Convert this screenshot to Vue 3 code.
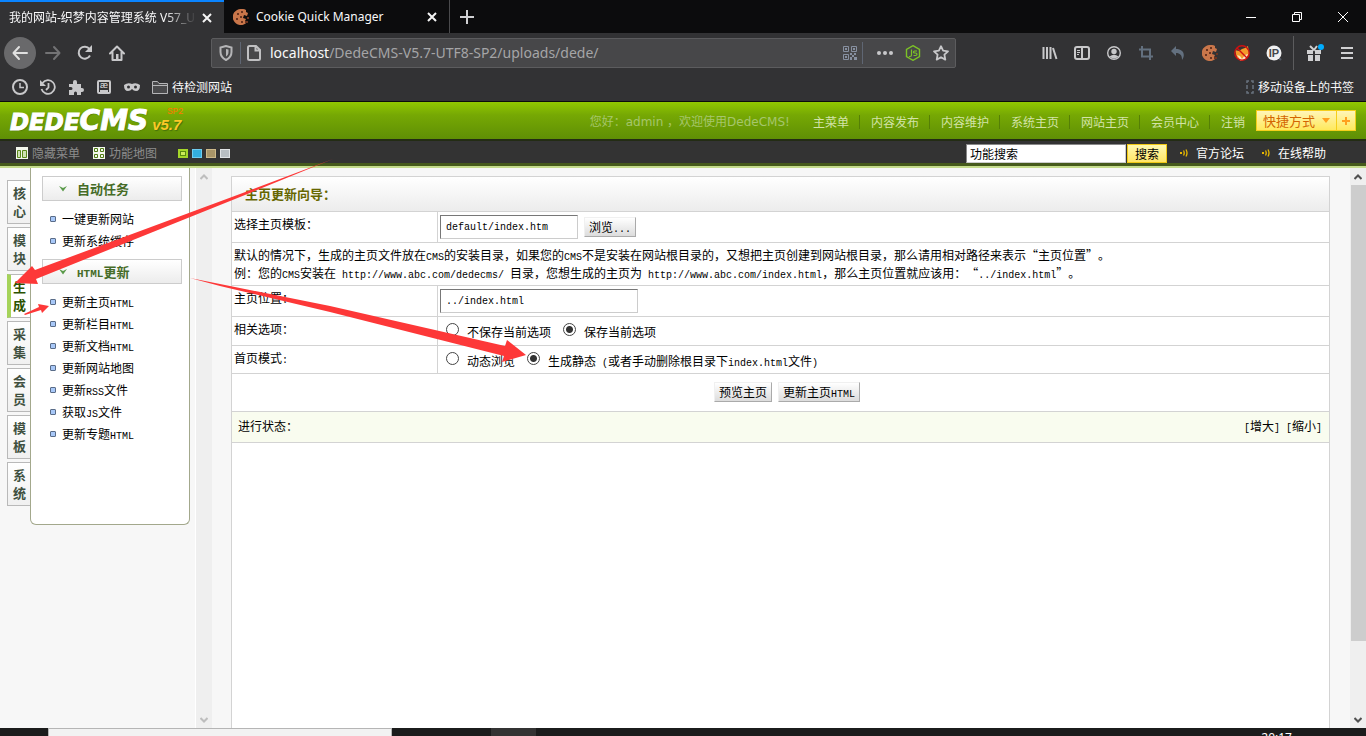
<template>
  <div class="screen" lang="zh-CN">
    <!-- Browser tabs -->
    <header class="tabbar">
      <div class="tab tab-active">
        <span class="tab-title fade">我的网站-织梦内容管理系统 V57_U</span>
        <button class="icon-btn tab-close" aria-label="关闭标签页">
          <svg width="12" height="12" viewBox="0 0 12 12"><path d="M2 2l8 8M10 2l-8 8" stroke="#f5f5f5" stroke-width="2" fill="none" /></svg>
        </button>
      </div>
      <div class="tab">
        <svg class="tab-icon" width="16" height="16" viewBox="0 0 16 16">
          <path d="M8 0a8 8 0 1 0 6 13l-2-1 1-2-3-1 1-3 3 1 1-3-2-1 0-2A8 8 0 0 0 8 0z" fill="#c9764a" />
          <path d="M4 4h2v2H4zM8 2h2v2H8zM3 9h2v2H3zM7 7h2v2H7zM8 12h2v2H8zM12 12h3v2h-3zM14 8h2v2h-2z" fill="#6b3420" />
        </svg>
        <span class="tab-title">Cookie Quick Manager</span>
        <button class="icon-btn tab-close" aria-label="关闭标签页">
          <svg width="12" height="12" viewBox="0 0 12 12"><path d="M2 2l8 8M10 2l-8 8" stroke="#f5f5f5" stroke-width="2" fill="none" /></svg>
        </button>
      </div>
      <button class="icon-btn new-tab" aria-label="新建标签页">
        <svg width="14" height="14" viewBox="0 0 14 14"><path d="M7 0v14M0 7h14" stroke="#d0d0d2" stroke-width="2" /></svg>
      </button>
      <div class="window-controls">
        <button class="icon-btn" aria-label="最小化">
          <svg width="10" height="10" viewBox="0 0 10 10"><path d="M0 5.5h10" stroke="#fff" /></svg>
        </button>
        <button class="icon-btn" aria-label="还原">
          <svg width="10" height="10" viewBox="0 0 10 10"><path d="M.5 2.500h7v7h-7zM2.500 2.500v-2h7v7h-2" stroke="#fff" fill="none" /></svg>
        </button>
        <button class="icon-btn" aria-label="关闭">
          <svg width="10" height="10" viewBox="0 0 10 10"><path d="M0 0l10 10M10 0L0 10" stroke="#fff" /></svg>
        </button>
      </div>
    </header>

    <!-- Navigation bar -->
    <div class="navbar">
      <button class="icon-btn back" aria-label="后退">
        <svg width="16" height="16" viewBox="0 0 16 16"><path d="M15 8H2M7 2L1.500 8 7 14" stroke="#e0e0e0" stroke-width="2" fill="none" stroke-linecap="round" stroke-linejoin="round" /></svg>
      </button>
      <button class="icon-btn tool" aria-label="前进">
        <svg width="16" height="16" viewBox="0 0 16 16"><path d="M1 8h13M9 2l5.500 6L9 14" stroke="#737375" stroke-width="2" fill="none" stroke-linecap="round" stroke-linejoin="round" /></svg>
      </button>
      <button class="icon-btn tool" aria-label="刷新">
        <svg width="16" height="16" viewBox="0 0 16 16"><path d="M13 10.500A6 6 0 1 1 12.500 4" stroke="#c8c8ca" stroke-width="2" fill="none" /><path d="M15 0v7H8z" fill="#c8c8ca" /></svg>
      </button>
      <button class="icon-btn tool" aria-label="主页">
        <svg width="16" height="16" viewBox="0 0 16 16"><path d="M1 8.500L8 1.500l7 7M3.500 7.500V15h9V7.500" stroke="#c8c8ca" stroke-width="2" fill="none" stroke-linecap="round" stroke-linejoin="round" /><path d="M7 9h2.500v6H7z" fill="#c8c8ca" /></svg>
      </button>
      <div class="urlbar">
        <svg class="shield" width="14" height="16" viewBox="0 0 14 16"><path d="M7 1L1.500 2.500V7c0 4 2.500 6.500 5.500 8 3-1.500 5.500-4 5.500-8V2.500z" stroke="#b5b5b7" stroke-width="2" fill="none" /><path d="M7 4v7.500c1.500-1 2.500-2.500 2.500-4.500V4.500z" fill="#b5b5b7" /></svg>
        <span class="url-sep"></span>
        <svg width="14" height="16" viewBox="0 0 14 16"><path d="M2.500 1H9l4 4v8.500a1.500 1.500 0 0 1-1.500 1.500h-9A1.500 1.500 0 0 1 1 13.500v-11A1.500 1.500 0 0 1 2.500 1zM8.500 1v4.500H13" stroke="#c0c0c2" stroke-width="2" fill="none" /></svg>
        <span class="url"><b>localhost</b>/DedeCMS-V5.7-UTF8-SP2/uploads/dede/</span>
        <svg width="14" height="14" viewBox="0 0 14 14">
          <path d="M.5 .5h5v5h-5zM8.500 .5h5v5h-5zM.5 8.500h5v5h-5z" stroke="#8790a0" fill="none" />
          <path d="M2 2h2v2H2zM10 2h2v2h-2zM2 10h2v2H2zM7 7h2v2H7zM9 9h2v2H9zM11 7h2v2h-2zM7 11h2v3H7zM11 11h3v3h-3z" fill="#8790a0" />
        </svg>
        <span class="url-sep"></span>
        <svg class="dots" width="16" height="16" viewBox="0 0 16 16"><circle cx="2" cy="8" r="2" /><circle cx="8" cy="8" r="2" /><circle cx="14" cy="8" r="2" /></svg>
        <svg class="node" width="16" height="16" viewBox="0 0 16 16"><path d="M8 .7l6.500 3.700v7.200L8 15.300l-6.500-3.700V4.400z" stroke="#7cc327" stroke-width="1.400" fill="none" /><path d="M6.500 4.500V10q0 1.500-1.500 1.500H4M12 6H9.500q-1 0-1 1t1 1h1q1.500 0 1.500 1.200T10.500 10.500H8.500" stroke="#7cc327" stroke-width="1.200" fill="none" /></svg>
        <svg width="16" height="16" viewBox="0 0 16 16"><path d="M8 1.200l2.100 4.500 4.900.6-3.600 3.400.9 4.900L8 12.200l-4.300 2.400.9-4.900L1 6.300l4.900-.6z" stroke="#c8c8ca" stroke-width="1.800" fill="none" stroke-linejoin="round" /></svg>
      </div>
      <div class="tools">
        <button class="icon-btn tool" aria-label="书库">
          <svg width="16" height="16" viewBox="0 0 16 16"><path d="M1.500 2v12M5 2v12M8.500 2v12M11 3l3.500 11" stroke="#c8c8ca" stroke-width="2" /></svg>
        </button>
        <button class="icon-btn tool" aria-label="侧栏">
          <svg width="16" height="14" viewBox="0 0 16 14"><rect x="1" y="1" width="14" height="12" rx="2" stroke="#c8c8ca" stroke-width="2" fill="none" /><path d="M8 1v12" stroke="#c8c8ca" stroke-width="2" /><path d="M3 4.500h3M3 6.500h3M3 8.500h2" stroke="#c8c8ca" /></svg>
        </button>
        <button class="icon-btn tool" aria-label="账户">
          <svg width="14" height="14" viewBox="0 0 14 14"><circle cx="7" cy="7" r="6.300" stroke="#c8c8ca" stroke-width="1.400" fill="none" /><circle cx="7" cy="5.500" r="2.700" fill="#c8c8ca" /><path d="M2.500 10.500q4.500-3.500 9 0Q7 14.500 2.500 10.500z" fill="#c8c8ca" /></svg>
        </button>
        <button class="icon-btn tool" aria-label="截图">
          <svg width="14" height="14" viewBox="0 0 14 14"><path d="M3 0v10.500h11M0 3.500h11V14" stroke="#63707f" stroke-width="2" fill="none" /></svg>
        </button>
        <button class="icon-btn tool" aria-label="撤销">
          <svg width="14" height="14" viewBox="0 0 14 14"><path d="M5 0v3c7 0 10 5 6 11 0-5-2-7-6-7v3L0 5z" fill="#63707f" /></svg>
        </button>
        <button class="icon-btn tool" aria-label="Cookie">
          <svg width="16" height="16" viewBox="0 0 16 16">
            <path d="M8 0a8 8 0 1 0 6 13l-2-1 1-2-3-1 1-3 3 1 1-3-2-1 0-2A8 8 0 0 0 8 0z" fill="#c9764a" />
            <path d="M4 4h2v2H4zM8 2h2v2H8zM3 9h2v2H3zM7 7h2v2H7zM8 12h2v2H8zM12 12h3v2h-3zM14 8h2v2h-2z" fill="#6b3420" />
          </svg>
        </button>
        <button class="icon-btn tool" aria-label="代理">
          <svg width="16" height="16" viewBox="0 0 16 16"><path d="M1 5l4 1 3-2 3-1 3-2 1 8-3 5-5 2-4-3z" fill="#f39a2b" /><path d="M3 10l3 1 2 3 3-4 3-1-2 5-5 2z" fill="#f7e3c4" /><circle cx="8" cy="8" r="7.200" stroke="#d01010" stroke-width="1.400" fill="none" /><path d="M3 3l10 10" stroke="#d01010" stroke-width="1.400" /></svg>
        </button>
        <button class="icon-btn tool" aria-label="IP">
          <svg width="16" height="16" viewBox="0 0 16 16"><path d="M12 12l3 3" stroke="#555b66" stroke-width="2" /><circle cx="8" cy="8" r="7.500" fill="#f0f0f2" /><text x="8" y="12" text-anchor="middle" font-size="11" font-weight="bold" fill="#44464c">IP</text></svg>
        </button>
        <span class="tools-sep"></span>
        <button class="icon-btn tool" aria-label="新功能">
          <svg width="18" height="18" viewBox="0 0 18 18"><path d="M1 6h6v4H1zM9 6h6v4H9zM2 11h5v6H2zM9 11h5v6H9z" fill="#d0d0d2" /><path d="M4 2l4 4 3-4" stroke="#d0d0d2" stroke-width="2" fill="none" /><circle cx="15" cy="3" r="3" fill="#00adff" /></svg>
        </button>
        <button class="icon-btn tool" aria-label="菜单">
          <svg width="12" height="12" viewBox="0 0 12 12"><path d="M0 1h12M0 6h12M0 11h12" stroke="#d0d0d2" stroke-width="2" /></svg>
        </button>
      </div>
    </div>

    <!-- Bookmarks -->
    <div class="bookmarks">
      <svg width="16" height="16" viewBox="0 0 16 16"><circle cx="8" cy="8" r="7" stroke="#c8c8ca" stroke-width="2" fill="none" /><path d="M8 4v4.500h4" stroke="#c8c8ca" stroke-width="1.500" fill="none" /></svg>
      <svg width="16" height="16" viewBox="0 0 16 16"><path d="M2.500 4a6.800 6.800 0 1 1-1 6M8.500 4v4.500L6 11" stroke="#c8c8ca" stroke-width="1.800" fill="none" /><path d="M0 1v6h6z" fill="#c8c8ca" /></svg>
      <svg width="16" height="16" viewBox="0 0 16 16"><path d="M1 5h4V3a2 2 0 1 1 4 0v2h4v4h1a2 2 0 1 1 0 4h-1v3H9v-2a1.500 1.500 0 0 0-3 0v2H1v-5h2a1.500 1.500 0 0 0 0-3H1z" fill="#c8c8ca" /></svg>
      <svg width="16" height="16" viewBox="0 0 16 16"><rect x="2" y="2" width="12" height="12" rx="1" stroke="#c8c8ca" stroke-width="2" fill="none" /><text x="8" y="9" text-anchor="middle" font-size="9" fill="#e0e0e0">æ</text><path d="M4 12h8" stroke="#c8c8ca" stroke-width="2" /></svg>
      <svg width="16" height="16" viewBox="0 0 16 16"><path d="M0 6q4-3 8-1 4-2 8 1 0 6-4 6-2.500 0-4-2-1.500 2-4 2-4 0-4-6z" fill="#c8c8ca" /><circle cx="4.500" cy="8" r="1.500" fill="#323234" /><circle cx="11.500" cy="8" r="1.500" fill="#323234" /></svg>
      <a class="bookmark" href="#">
        <svg width="16" height="16" viewBox="0 0 16 16"><path d="M.5 14.500v-12h5l1.500 2h8.500v10zM.5 6.500h15" stroke="#b5b5b7" fill="#4a4a4c" /></svg>
        待检测网站
      </a>
      <a class="bookmark mobile" href="#">
        <svg width="8" height="14" viewBox="0 0 8 14"><path d="M1 3V1h2M5 1h2v2M1 11v2h2M5 13h2v-2M1 5v4M7 5v4" stroke="#69737f" stroke-width="1.500" fill="none" /></svg>
        移动设备上的书签
      </a>
    </div>

    <!-- CMS header -->
    <div class="cms-top">
      <div class="logo">
        <span class="logo-dede">DEDE</span><span class="logo-cms">CMS</span>
        <span class="logo-version"><small>SP2</small>v5.7</span>
      </div>
      <p class="greeting">您好：admin ，欢迎使用DedeCMS!</p>
      <nav class="top-nav">
        <a v-for="link in topLinks" :key="link" href="#">{{ link }}</a>
      </nav>
      <div class="quick">
        <button class="quick-menu">快捷方式 <i class="caret"></i></button>
        <button class="quick-add" aria-label="添加快捷方式">
          <svg width="8" height="8" viewBox="0 0 8 8"><path d="M4 0v8M0 4h8" stroke="#ffa01e" stroke-width="2" /></svg>
        </button>
      </div>
    </div>
    <div class="cms-bar">
      <a class="bar-link" href="#">
        <svg width="12" height="12" viewBox="0 0 12 12"><path d="M0 0h12v12H0z" fill="#f4f8ee" /><path d="M1.500 3.500h3v7h-3zM6.500 3.500h4v7h-4z" stroke="#5d8a1c" fill="#cfe2b4" /></svg>
        隐藏菜单
      </a>
      <a class="bar-link" href="#">
        <svg width="12" height="12" viewBox="0 0 12 12"><path d="M0 0h12v12H0z" fill="#f4f8ee" /><path d="M1.500 1.500h3v3h-3zM7.500 1.500h3v3h-3zM1.500 7.500h3v3h-3zM7.500 7.500h3v3h-3z" stroke="#4f7c14" fill="none" /></svg>
        功能地图
      </a>
      <div class="skins">
        <button v-for="skin in skins" :key="skin" class="skin" :class="skin" :aria-label="skin"></button>
      </div>
      <form class="search" @submit.prevent>
        <input v-model="keyword" type="text" aria-label="功能搜索" />
        <button type="submit">搜索</button>
      </form>
      <a v-for="help in helpLinks" :key="help" class="help-link" href="#">
        <svg width="8" height="8" viewBox="0 0 8 8"><path d="M0 3h2v2H0z" fill="#e8b800" /><path d="M3.500 1.500q1.500 2.500 0 5M6 .5q2 3.500 0 7" stroke="#e8b800" stroke-width="1.300" fill="none" /></svg>
        {{ help }}
      </a>
    </div>

    <div class="body">
      <nav class="side-tabs">
        <a
          v-for="tab in sideTabs"
          :key="tab"
          href="#"
          :class="{ active: tab === activeTab }"
          @click.prevent="activeTab = tab"
        >{{ tab }}</a>
      </nav>

      <aside class="menu">
        <section v-for="group in menu" :key="group.title">
          <h3>
            <svg width="8" height="6" viewBox="0 0 8 6"><path d="M0 0l4 2 4-2-4 5.500z" fill="#5a9a4a" /></svg>
            <span v-html="group.title"></span>
          </h3>
          <ul>
            <li v-for="item in group.items" :key="item.join('')">
              <a href="#">{{ item[0] }}<span class="en">{{ item[1] }}</span>{{ item[2] }}</a>
            </li>
          </ul>
        </section>
      </aside>

      <div class="scroll menu-scroll">
        <svg width="8" height="6" viewBox="0 0 8 6"><path d="M.5 5L4 1.500 7.500 5" stroke="#bdbdbd" stroke-width="2" fill="none" /></svg>
        <svg width="8" height="6" viewBox="0 0 8 6"><path d="M.5 1L4 4.500 7.500 1" stroke="#bdbdbd" stroke-width="2" fill="none" /></svg>
      </div>

      <main class="main">
        <form class="panel" @submit.prevent>
          <table>
            <colgroup>
              <col class="col-name" />
              <col />
            </colgroup>
            <tbody>
              <tr class="row-title"><th colspan="2">主页更新向导：</th></tr>
              <tr class="row-input">
                <td class="name"><label for="template">选择主页模板：</label></td>
                <td>
                  <div class="line">
                    <input id="template" v-model="template" class="text template" type="text" />
                    <button class="btn" type="button">浏览<span class="en">...</span></button>
                  </div>
                </td>
              </tr>
              <tr class="row-note">
                <td colspan="2">
                  默认的情况下，生成的主页文件放在<span class="en">CMS</span>的安装目录，如果您的<span class="en">CMS</span>不是安装在网站根目录的，又想把主页创建到网站根目录，那么请用相对路径来表示“主页位置”。<br />
                  例：您的<span class="en">CMS</span>安装在<span class="en"> http://www.abc.com/dedecms/ </span>目录，您想生成的主页为<span class="en"> http://www.abc.com/index.html</span>，那么主页位置就应该用：<span class="en"> </span>“<span class="en">../index.html</span>”。
                </td>
              </tr>
              <tr class="row-input">
                <td class="name"><label for="position">主页位置：</label></td>
                <td>
                  <div class="line">
                    <input id="position" v-model="position" class="text position" type="text" />
                  </div>
                </td>
              </tr>
              <tr class="row-save">
                <td class="name">相关选项：</td>
                <td>
                  <div class="line radios">
                    <label><input v-model="saveOption" type="radio" name="save" value="0" /><span>不保存当前选项</span></label>
                    <label><input v-model="saveOption" type="radio" name="save" value="1" /><span>保存当前选项</span></label>
                  </div>
                </td>
              </tr>
              <tr class="row-mode">
                <td class="name">首页模式<span class="en">:</span></td>
                <td>
                  <div class="line radios">
                    <label><input v-model="mode" type="radio" name="mode" value="dynamic" /><span>动态浏览</span></label>
                    <label><input v-model="mode" type="radio" name="mode" value="static" /><span>生成静态<span class="en"> (</span>或者手动删除根目录下<span class="en">index.html</span>文件<span class="en">)</span></span></label>
                  </div>
                </td>
              </tr>
              <tr class="row-actions">
                <td colspan="2">
                  <div class="line actions">
                    <button class="btn" type="button">预览主页</button>
                    <button class="btn" type="submit">更新主页<span class="en">HTML</span></button>
                  </div>
                </td>
              </tr>
              <tr class="row-status">
                <td colspan="2">
                  <div class="line status">
                    <span>进行状态：</span>
                    <span class="resize"><a href="#"><span class="en">[</span>增大<span class="en">]</span></a><a href="#"><span class="en">[</span>缩小<span class="en">]</span></a></span>
                  </div>
                </td>
              </tr>
            </tbody>
          </table>
        </form>
      </main>

      <div class="scroll main-scroll">
        <svg width="8" height="6" viewBox="0 0 8 6"><path d="M.5 5L4 1.500 7.500 5" stroke="#505050" stroke-width="2" fill="none" /></svg>
        <div class="thumb"></div>
        <svg width="8" height="6" viewBox="0 0 8 6"><path d="M.5 1L4 4.500 7.500 1" stroke="#505050" stroke-width="2" fill="none" /></svg>
      </div>
    </div>

    <footer class="taskbar">
      <div class="task-search"></div>
      <div class="task-active"></div>
      <time>20:17</time>
    </footer>

    <!-- Annotation arrows -->
    <svg class="arrows" width="560" height="380" viewBox="0 0 560 380">
      <path d="M333 159L240 194 35 270 32 266 15 283 38 284 36 279 240 197z" />
      <path d="M190 278L220 284 330 306 505 346 507 340 526 355 502 362 504 356 330 312 220 286z" />
      <path d="M24 314L39 307 38 304 49 306 42 313 41 310 25 315z" />
    </svg>
  </div>
</template>

<script setup>
import { ref } from 'vue';

const topLinks = ['主菜单', '内容发布', '内容维护', '系统主页', '网站主页', '会员中心', '注销'];
const helpLinks = ['官方论坛', '在线帮助'];
const skins = ['green', 'blue', 'brown', 'grey'];
const sideTabs = ['核心', '模块', '生成', '采集', '会员', '模板', '系统'];

const menu = [
  {
    title: '自动任务',
    items: [['一键更新网站'], ['更新系统缓存']]
  },
  {
    title: '<span class="en">HTML</span>更新',
    items: [
      ['更新主页', 'HTML'],
      ['更新栏目', 'HTML'],
      ['更新文档', 'HTML'],
      ['更新网站地图'],
      ['更新', 'RSS', '文件'],
      ['获取', 'JS', '文件'],
      ['更新专题', 'HTML']
    ]
  }
];

const activeTab = ref('生成');
const keyword = ref('功能搜索');
const template = ref('default/index.htm');
const position = ref('../index.html');
const saveOption = ref('1');
const mode = ref('static');
</script>

<style>
body {
  margin: 0;
  background: #f7f7f7;
}

/* Latin runs inside 12px Chinese text are half a character wide */
.en {
  font-family: "Liberation Mono", monospace;
  font-size: 10px;
  line-height: 10px;
  white-space: pre;
}

h3 .en {
  font-size: 11px;
}
</style>

<style scoped>
.screen {
  position: relative;
  display: flex;
  flex-direction: column;
  height: 100vh;
  overflow: hidden;
  font: 12px/18px "Noto Sans CJK SC", sans-serif;
  text-spacing-trim: space-all;
  color: #000;
}

.screen * {
  box-sizing: border-box;
}

a {
  color: inherit;
  text-decoration: none;
}

button,
input {
  font: inherit;
  margin: 0;
}

svg {
  flex: none;
  display: block;
}

.icon-btn {
  display: flex;
  align-items: center;
  justify-content: center;
  flex: none;
  padding: 0;
  border: none;
  background: none;
}

/* browser */
.tabbar {
  display: flex;
  flex: none;
  height: 33px;
  background: #0c0c0d;
  color: #f9f9fa;
  font-family: "Noto Sans", "Noto Sans CJK SC", sans-serif;
}

.tab {
  display: flex;
  align-items: center;
  width: 226px;
  padding: 0 7px 0 9px;
  border-right: 1px solid #4a4a4c;
}

.tab-active {
  width: 224px;
  background: #323234;
  border-right: none;
  border-top: 2px solid #0a84ff;
}

.tab-icon {
  margin-right: 7px;
}

.tab-title {
  flex: 1;
  white-space: nowrap;
}

.fade {
  mask-image: linear-gradient(to right, #000 155px, transparent 188px);
}

.tab-close {
  width: 20px;
  height: 20px;
}

.new-tab {
  width: 33px;
}

.window-controls {
  display: flex;
  margin-left: auto;
}

.window-controls .icon-btn {
  width: 46px;
}

.navbar {
  display: flex;
  align-items: center;
  flex: none;
  height: 40px;
  padding: 0 3px 0 4px;
  background: #323234;
}

.back {
  width: 32px;
  height: 32px;
  margin-right: 1px;
  border-radius: 50%;
  background: #69696b;
}

.tool {
  width: 32px;
  height: 32px;
}

.urlbar {
  display: flex;
  align-items: center;
  flex: 1;
  height: 30px;
  margin: 0 78px;
  padding: 0 6px 0 7px;
  border: 1px solid #5c5c5e;
  border-radius: 2px;
  background: #474749;
}

.shield {
  margin-right: 2px;
}

.url-sep {
  width: 1px;
  height: 22px;
  margin: 0 6px 0 5px;
  background: #5f6673;
}

.url {
  flex: 1;
  margin-left: 9px;
  font: 14px/20px "Noto Sans", sans-serif;
  color: #a5a5a7;
}

.url b {
  font-weight: normal;
  color: #f9f9fa;
}

.dots {
  margin: 0 12px 0 8px;
  fill: #c8c8ca;
}

.node {
  margin-right: 12px;
}

.tools {
  display: flex;
  align-items: center;
}

.tools text,
.bookmarks text {
  font-family: "Liberation Sans", sans-serif;
}

.tools-sep {
  width: 1px;
  height: 34px;
  margin: 0 5px 0 3px;
  background: #5c5c5e;
}

.bookmarks {
  display: flex;
  align-items: center;
  gap: 12px;
  flex: none;
  height: 29px;
  padding: 0 12px;
  border-bottom: 1px solid #0c0c0d;
  background: #323234;
  color: #f9f9fa;
}

.bookmark {
  display: flex;
  align-items: center;
  gap: 4px;
}

.mobile {
  margin-left: auto;
}

/* cms header */
.cms-top {
  display: flex;
  flex: none;
  height: 39px;
  padding: 0 10px;
  border-bottom: 2px solid #232c14;
  background: linear-gradient(#91c800, #76a804 35%, #5f8f05);
  color: #d3e3a8;
}

.logo {
  display: flex;
  align-items: baseline;
  margin-right: auto;
  font-family: "DejaVu Sans", sans-serif;
  font-weight: bold;
  font-style: italic;
  line-height: 38px;
  color: #fff;
  text-shadow: 1px 1px 1px #47700a;
}

.logo-dede,
.logo-cms {
  -webkit-text-stroke: 1px #fff;
}

.logo-dede {
  font-size: 23px;
}

.logo-cms {
  font-size: 28px;
}

.logo-version {
  position: relative;
  margin-left: 4px;
  font: italic bold 15px/20px "Liberation Sans", sans-serif;
  color: #fbc926;
}

.logo-version small {
  position: absolute;
  left: 15px;
  top: -9px;
  font: 9px/12px "Liberation Mono", monospace;
  color: #ff7800;
  text-shadow: none;
}

.greeting {
  margin: 11px 12px 0 0;
  font-family: "DejaVu Sans", "Noto Sans CJK SC", sans-serif;
  white-space: nowrap;
  color: #a6c66c;
}

.top-nav {
  display: flex;
  margin-top: 13px;
}

.top-nav a {
  height: 14px;
  padding: 0 10px 0 11px;
  line-height: 14px;
  white-space: nowrap;
  border-right: 1px solid #557f05;
}

.top-nav a:last-child {
  border-right: none;
}

.quick {
  display: flex;
  height: 21px;
  margin: 8px 0 0 1px;
}

.quick button {
  display: flex;
  align-items: center;
  padding: 0 6px;
  border: 1px solid #f5cf1b;
  background: linear-gradient(#fff5b8, #ffe95c);
  color: #d36500;
  white-space: nowrap;
}

.quick .quick-menu {
  gap: 7px;
  font-size: 13px;
}

.quick .quick-add {
  padding: 0 5px;
  border-left: none;
}

.caret {
  border: 4px solid transparent;
  border-top: 5px solid #ffa01e;
  border-bottom: none;
}

.cms-bar {
  display: flex;
  align-items: center;
  flex: none;
  height: 27px;
  padding: 0 40px 1px 16px;
  border-bottom: 2px solid #c5dc8c;
  background: #333;
  box-shadow: inset 0 -3px #465a1c;
  color: #fff;
}

.bar-link {
  display: flex;
  align-items: center;
  gap: 4px;
  margin-right: 13px;
  color: #8c8c8c;
}

.skins {
  display: flex;
  gap: 4px;
  margin-left: 8px;
}

.skin {
  width: 10px;
  height: 9px;
  padding: 0;
  border: 1px solid #ccc;
}

.green {
  border: 2px solid #a5d62a;
  background: #cdea5a;
  box-shadow: inset 0 0 0 1px #5a8a10;
}

.blue {
  border-color: #6fcdf0;
  background: #33aede;
}

.brown {
  border-color: #cdb98a;
  background: #a99568;
}

.grey {
  border-color: #dfe2e4;
  background: #b8bec2;
}

.search {
  display: flex;
  gap: 1px;
  margin-left: auto;
  margin-right: 13px;
}

.search input {
  width: 160px;
  height: 19px;
  padding: 0 3px;
  border: 1px solid #888;
  border-right-color: #ccc;
  border-bottom-color: #ccc;
  border-radius: 0;
}

.search button {
  width: 40px;
  height: 19px;
  padding: 0;
  border: 1px solid #f0c814;
  line-height: 17px;
  background: linear-gradient(#fff9b0, #ffe566);
}

.help-link {
  display: flex;
  align-items: center;
  gap: 8px;
  margin-left: 18px;
}

.search + .help-link {
  margin-left: 0;
}

/* body */
.body {
  display: flex;
  flex: 1;
  min-height: 0;
  background: #f7f7f7;
}

.side-tabs {
  display: flex;
  flex-direction: column;
  gap: 3px;
  flex: none;
  width: 30px;
  padding: 12px 0 0 7px;
}

.side-tabs a {
  height: 44px;
  padding: 3px 4px 0 5px;
  border: 1px solid #b9b9b9;
  border-right: none;
  background: linear-gradient(#fff, #f0f0f0);
  font-size: 13px;
  font-weight: bold;
  color: #40503f;
  word-break: break-all;
}

.side-tabs .active {
  padding-left: 2px;
  border-left: 4px solid #a5d35a;
  background: #fff;
  color: #2c5200;
}

.menu {
  flex: none;
  align-self: flex-start;
  width: 160px;
  height: 357px;
  padding: 8px 7px 0 11px;
  border: 1px solid #a3a88c;
  border-top: none;
  border-radius: 0 0 6px 6px;
  background: #fff;
}

.menu h3 {
  display: flex;
  align-items: center;
  gap: 10px;
  height: 25px;
  margin: 0 0 7px;
  padding-left: 16px;
  border: 1px solid #ccc;
  background: linear-gradient(#fff, #ececec);
  font-size: 13px;
  color: #466c28;
}

.menu ul {
  margin: 0 0 7px;
  padding: 0;
  list-style: none;
}

.menu li {
  display: flex;
  align-items: center;
  gap: 6px;
  height: 22px;
  padding-left: 8px;
}

.menu li::before {
  content: "";
  box-sizing: border-box;
  width: 6px;
  height: 6px;
  border: 1px solid #5a6c88;
  border-radius: 1px;
  background: #a8c8f8;
}

.scroll {
  display: flex;
  flex-direction: column;
  align-items: center;
  justify-content: space-between;
  flex: none;
  width: 16px;
  padding: 6px 0 5px;
  background: #efefef;
}

.menu-scroll {
  box-shadow: -1px 0 #fff;
  margin-left: 6px;
}

.thumb {
  width: 15px;
  height: 83%;
  margin: 5px 0 auto;
  background: #cdcdcd;
}

.main {
  display: flex;
  flex: 1;
  min-width: 0;
  padding: 8px 20px 0 19px;
}

.panel {
  flex: 1;
  border: 1px solid #d3d3d3;
  border-bottom: none;
  background: #fff;
}

table {
  width: 100%;
  border-collapse: separate;
  border-spacing: 0;
  table-layout: fixed;
}

.col-name {
  width: 206px;
}

th,
td {
  padding: 3px 3px 0 2px;
  border-bottom: 1px solid #d3d3d3;
  text-align: left;
  vertical-align: top;
}

.name {
  border-right: 1px solid #d3d3d3;
}

.row-title th {
  height: 35px;
  padding: 8px 13px 0;
  background: linear-gradient(#fff, #ececec);
  font-size: 13px;
  color: #666600;
}

.row-input td {
  height: 31px;
}

.row-note td {
  height: 43px;
}

.row-save td {
  height: 31px;
}

.row-save td {
  height: 29px;
}

.row-mode td {
  height: 28px;
}

.row-actions td {
  height: 38px;
}

.row-status td {
  height: 31px;
  background: #f9fcef;
}

.line {
  display: flex;
  align-items: center;
  gap: 6px;
}

.text {
  height: 24px;
  padding: 0 5px;
  border: 1px solid #ccc;
  border-top-color: #777;
  border-left-color: #777;
  border-radius: 0;
  font-family: "Liberation Mono", monospace;
  font-size: 10px;
}

.template {
  width: 138px;
}

.position {
  width: 198px;
}

.btn {
  height: 20px;
  padding: 0 4px;
  border: 1px solid #f0f0f0;
  border-right-color: #aaa;
  border-bottom-color: #aaa;
  line-height: 18px;
  background: linear-gradient(#fff, #dcdcdc);
  color: #000;
}

.radios {
  gap: 12px;
  padding-left: 6px;
}

.radios label {
  display: flex;
  gap: 8px;
}

.radios label > span {
  padding-top: 3px;
}

.radios input {
  appearance: none;
  width: 13px;
  height: 13px;
  margin-top: 3px;
  border: 1px solid #444;
  border-radius: 50%;
  background: #fff;
}

.radios input:checked {
  background: radial-gradient(circle, #333 3px, #fff 4px);
}

.actions {
  justify-content: center;
  padding: 5px 0 0 14px;
}

.status {
  justify-content: space-between;
  padding: 2px 4px 0;
}

.resize {
  display: flex;
  gap: 6px;
}

.taskbar {
  display: flex;
  flex: none;
  height: 8px;
  padding: 0 74px 0 48px;
  overflow: hidden;
  background: #1b1c1c;
}

.task-search {
  width: 344px;
  border: 1px solid #b5b5b5;
  border-bottom: none;
  background: #f2f2f2;
}

.task-active {
  width: 45px;
  margin-left: 99px;
  background: #333;
}

.taskbar time {
  margin-left: auto;
  padding-top: 2px;
  font-family: "Noto Sans", sans-serif;
  line-height: 16px;
  color: #fff;
}

.arrows {
  position: absolute;
  left: 0;
  top: 0;
  fill: #fd3838;
  pointer-events: none;
}
</style>
